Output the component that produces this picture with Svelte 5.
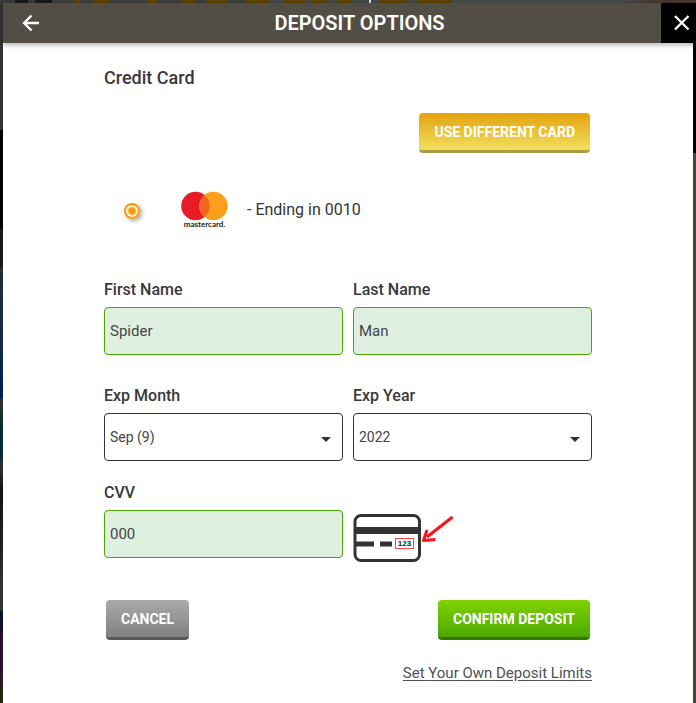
<script>
  let selectedCard = $state('0010');
  let firstName = $state('Spider');
  let lastName = $state('Man');
  let month = $state('9');
  let year = $state('2022');
  let cvv = $state('000');

  const months = ['Jan', 'Feb', 'Mar', 'Apr', 'May', 'Jun', 'Jul', 'Aug', 'Sep', 'Oct', 'Nov', 'Dec'];
  const years = ['2022', '2023', '2024', '2025', '2026', '2027'];
</script>

<div class="backdrop">
  <div class="modal" role="dialog" aria-labelledby="title">
    <header>
      <button type="button" class="back" aria-label="Back">
        <svg width="18" height="18" viewBox="0 0 18 18" fill="none" stroke="#fff" stroke-width="2.300">
          <path d="M17 9H2M9.500 1.500L2 9l7.500 7.500" />
        </svg>
      </button>
      <h1 id="title">DEPOSIT OPTIONS</h1>
      <button type="button" class="close" aria-label="Close">
        <svg width="16" height="16" viewBox="0 0 16 16" fill="none" stroke="#fff" stroke-width="2.300">
          <path d="M1 1l13.500 13.500M14.500 1L1 14.500" />
        </svg>
      </button>
    </header>

    <form onsubmit={(e) => e.preventDefault()}>
      <h2>Credit Card</h2>
      <div class="switch">
        <button type="button" class="btn gold">USE DIFFERENT CARD</button>
      </div>

      <label class="card">
        <input type="radio" name="card" value="0010" bind:group={selectedCard} />
        <svg class="logo" width="48" height="38" viewBox="0 0 48 38" role="img" aria-label="mastercard">
          <circle cx="14.500" cy="15" r="14.300" fill="#e81c24" />
          <circle cx="32.500" cy="15" r="14.300" fill="#faa01c" />
          <path d="M23.500 3.900a14.300 14.300 0 0 1 0 22.200a14.300 14.300 0 0 1 0-22.200z" fill="#f46520" />
          <text x="23.500" y="36" text-anchor="middle">mastercard.</text>
        </svg>
        <span>- Ending in 0010</span>
      </label>

      <div class="row names">
        <div class="field">
          <label for="first">First Name</label>
          <input id="first" type="text" bind:value={firstName} />
        </div>
        <div class="field">
          <label for="last">Last Name</label>
          <input id="last" type="text" bind:value={lastName} />
        </div>
      </div>

      <div class="row expiry">
        <div class="field">
          <label for="month">Exp Month</label>
          <div class="select">
            <select id="month" bind:value={month}>
              {#each months as name, i}
                <option value={String(i + 1)}>{name} ({i + 1})</option>
              {/each}
            </select>
            <svg width="10" height="5" viewBox="0 0 10 5"><path d="M0 0h10L5 5z" fill="#333" /></svg>
          </div>
        </div>
        <div class="field">
          <label for="year">Exp Year</label>
          <div class="select">
            <select id="year" bind:value={year}>
              {#each years as y}
                <option value={y}>{y}</option>
              {/each}
            </select>
            <svg width="10" height="5" viewBox="0 0 10 5"><path d="M0 0h10L5 5z" fill="#333" /></svg>
          </div>
        </div>
      </div>

      <div class="row security">
        <div class="field">
          <label for="cvv">CVV</label>
          <input id="cvv" type="text" inputmode="numeric" bind:value={cvv} />
        </div>
        <div class="field hint">
          <svg width="101" height="52" viewBox="0 0 101 52" role="img" aria-label="Three digit code on the back of the card">
            <rect x="2" y="5.500" width="64.500" height="45" rx="6" fill="#fff" stroke="#333335" stroke-width="3" />
            <path d="M2 17h65v7H2zM3 31.500h18v5H3zM27 31.500h12v5H27z" fill="#333335" />
            <rect x="42.500" y="28.500" width="18" height="10" fill="#fff" stroke="#f44" />
            <text x="51.500" y="36" text-anchor="middle">123</text>
            <path d="M99.500 7L74 27" fill="none" stroke="#fb1118" stroke-width="3" />
            <path d="M74 20l-3.500 10.500l12-1" fill="none" stroke="#fb1118" stroke-width="3" stroke-linejoin="round" />
          </svg>
        </div>
      </div>

      <div class="actions">
        <button type="button" class="btn gray">CANCEL</button>
        <button type="submit" class="btn green">CONFIRM DEPOSIT</button>
      </div>
      <div class="limits"><a href="#limits">Set Your Own Deposit Limits</a></div>
    </form>
  </div>
</div>

<style>
  :global(body) {
    background: #48453c;
  }
  .backdrop,
  .backdrop * {
    box-sizing: border-box;
  }
  .backdrop {
    min-height: 100vh;
    padding: 3px 3px 0;
    display: flex;
    font-family: Roboto, "Liberation Sans", sans-serif;
    color: #38383c;
    background:
      linear-gradient(90deg, #3a3a3a 0 15px, #191919 15px 28px, #3a3a3a 28px 35px, #191919 35px 52px, #3d3d3d 52px 73px,
        #5d4300 73px 80px, #3d3d3d 80px 93px, #5d4300 93px 110px, #3d3d3d 110px 147px, #5d4300 147px 157px,
        #3d3d3d 157px 181px, #5d4300 181px 195px, #3d3d3d 195px 207px, #5d4300 207px 227px,
        #3d4040 227px 246px, #5d4300 246px 270px, #454848 270px 283px, #5d4300 283px 305px, #454848 305px 312px,
        #5d4300 312px 327px, #454848 327px 337px, #5d4300 337px 352px, #454848 352px 369px, #ddd 369px 371px,
        #454848 371px 380px, #5d4300 380px 408px, #454848 408px 417px, #5d4300 417px 452px, #454a4a 452px 620px,
        #49352c 660px) top / 100% 3px no-repeat,
      linear-gradient(#000, #000) right top / 3px 153px no-repeat,
      linear-gradient(#333 0 130px, #000 130px 229px, #191919 229px 267px, #242d34 268px, #12284a 350px, #00204e 398px,
        #333 400px, #062c30 425px, #002a33 455px, #333 466px, #171214 490px, #222 550px, #333 581px 610px, #001428 612px,
        #2b0e2c 640px, #2b1433 670px, #2a260c 690px) left top / 3px 100% no-repeat,
      #48453c;
  }
  .modal {
    flex: 1;
    min-width: 0;
    background: #fff;
  }
  button {
    font-family: inherit;
    cursor: pointer;
  }
  header {
    display: flex;
    height: 40px;
    margin-right: -3px;
    background: #524d45;
    box-shadow: 0 2px 5px rgba(0, 0, 0, 0.3);
  }
  .back,
  .close {
    display: flex;
    align-items: center;
    justify-content: center;
    border: 0;
    padding: 0;
    background: none;
  }
  .back {
    width: 55px;
  }
  .close {
    width: 35px;
    padding-left: 6px;
    background: #000;
  }
  h1 {
    flex: 1;
    margin: 0;
    text-align: center;
    font-size: 20px;
    line-height: 40px;
    font-weight: 600;
    color: #fff;
  }
  form {
    max-width: 488px;
    margin: 0 auto;
    padding: 23px 0 16px;
  }
  h2 {
    margin: 0;
    font-size: 18px;
    line-height: 24px;
    font-weight: 500;
  }
  .switch {
    display: flex;
    justify-content: flex-end;
    margin-top: 23px;
    padding-right: 2px;
  }
  .btn {
    height: 40px;
    padding: 0 15px;
    border: 0;
    border-bottom: 3px solid;
    border-radius: 4px;
    font-size: 14px;
    font-weight: 700;
    color: #fff;
  }
  .gold {
    background: linear-gradient(#e3a30f, #f2df5e);
    border-color: #a99b42;
  }
  .gray {
    background: linear-gradient(#aaa, #808080);
    border-color: #595959;
  }
  .green {
    background: linear-gradient(#80d200, #4ca800);
    border-color: #357600;
  }
  .card {
    display: flex;
    align-items: center;
    margin-top: 38px;
    padding-left: 20px;
    font-size: 16px;
    line-height: 24px;
    color: #333;
  }
  .card input {
    appearance: none;
    width: 16px;
    height: 16px;
    margin: 2px 41px 0 0;
    border: 2px solid #ff9800;
    border-radius: 50%;
    background: radial-gradient(circle, #ff9800 3px, #fff 5px);
    box-shadow: 2px 2px 4px rgba(0, 0, 0, 0.35);
  }
  .logo {
    margin-right: 18px;
  }
  .logo text {
    font: 700 8px Lato, sans-serif;
    fill: #222;
  }
  .row {
    display: flex;
    gap: 10px;
  }
  .names {
    margin-top: 49px;
  }
  .expiry {
    margin-top: 29px;
  }
  .security {
    margin-top: 20px;
  }
  .field {
    flex: 1;
    min-width: 0;
    display: flex;
    flex-direction: column;
    gap: 5px;
  }
  .field label {
    font-size: 16px;
    line-height: 24px;
    font-weight: 500;
  }
  .field input,
  .field select {
    width: 100%;
    height: 48px;
    padding: 0 5px;
    border: 1px solid #333338;
    border-radius: 4px;
    background: #fff;
    font-family: inherit;
    font-size: 14px;
    color: #444448;
  }
  .field input {
    border-color: #4ca800;
    background: #dff0e0;
    font-size: 15px;
  }
  .field select {
    appearance: none;
  }
  .select {
    position: relative;
  }
  .select svg {
    position: absolute;
    right: 12px;
    top: 24px;
    pointer-events: none;
  }
  .hint {
    justify-content: flex-end;
  }
  .hint svg {
    margin-bottom: -4px;
  }
  .hint text {
    font: 700 8px "Liberation Sans", sans-serif;
    fill: #222;
  }
  .actions {
    display: flex;
    justify-content: space-between;
    margin-top: 42px;
    padding: 0 2px;
  }
  .limits {
    margin-top: 21px;
    text-align: right;
    font-size: 15px;
    line-height: 24px;
  }
  .limits a {
    color: #505054;
    text-underline-offset: 2px;
  }
</style>
